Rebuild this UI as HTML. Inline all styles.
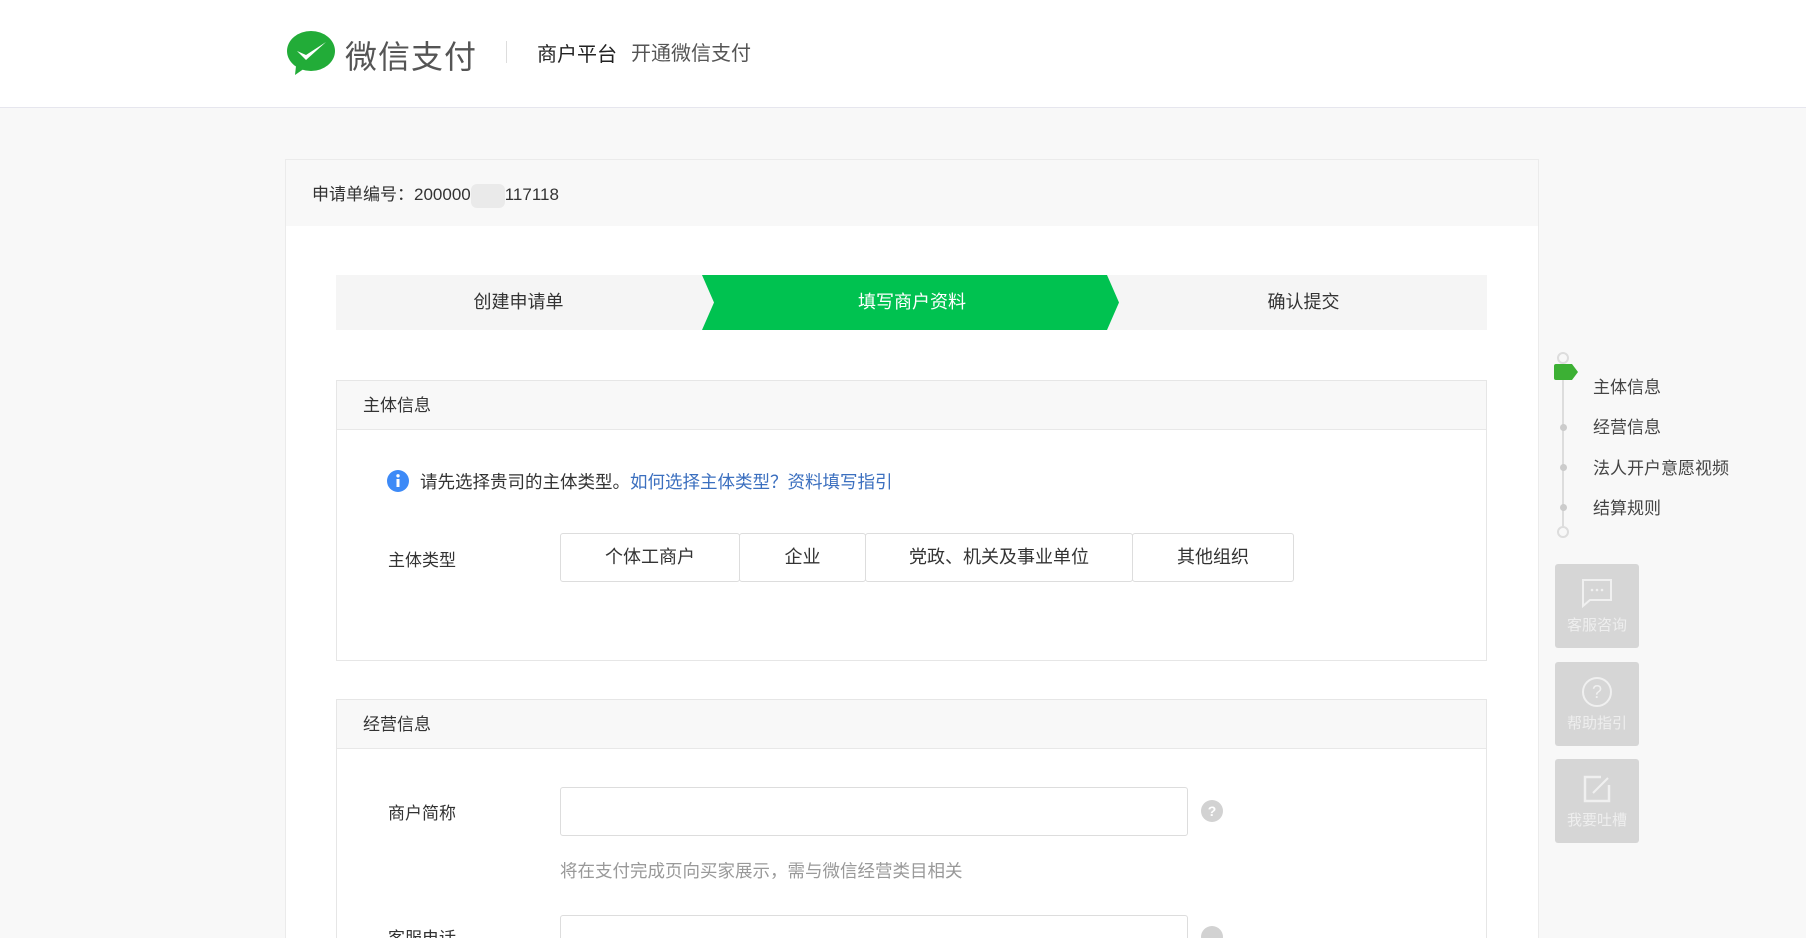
<!DOCTYPE html>
<html><head><meta charset="utf-8"><style>
*{margin:0;padding:0;box-sizing:border-box}
html{width:1806px;height:938px;overflow:hidden}
body{width:1806px;height:938px;overflow:hidden;background:#f8f8f8;font-family:"Liberation Sans","Noto Sans CJK SC",sans-serif;color:#333;position:relative}
.abs{position:absolute}
.hdr{left:0;top:0;width:1806px;height:108px;background:#fff;border-bottom:1px solid #e6e6ee}
.card{left:285px;top:159px;width:1254px;height:779px;background:#fff;border:1px solid #ebebeb;border-bottom:none}
.cardtop{left:0;top:0;width:1252px;height:66px;background:#f8f8f8}
.sec{border:1px solid #e6e6e6;background:#fff}
.sech{position:absolute;left:0;top:0;right:0;height:49px;background:#f8f8f8;border-bottom:1px solid #e8e8e8;font-size:17px;line-height:49px;padding-left:26px}
.btn{position:absolute;top:533px;height:49px;border:1px solid #ddd;border-radius:3px;background:#fff;font-size:18px;line-height:47px;text-align:center;color:#333}
.side{position:absolute;left:1555px;width:84px;height:84px;background:#d6d6d6;border-radius:3px;color:#eee;font-size:15px;text-align:center}
.nav{position:absolute;left:1593px;font-size:17px;color:#444}
.dot{position:absolute;left:1560px;width:7px;height:7px;border-radius:50%;background:#ccc}
</style></head><body>
<div class="abs hdr">
<svg class="abs" style="left:286px;top:30px" width="50" height="46" viewBox="0 0 50 46"><ellipse cx="25" cy="21" rx="24" ry="20" fill="#22ac38"/><path d="M10 36 L9 45 L19 38Z" fill="#22ac38"/><path d="M11 21 L20 30 L40 12 L20 25Z" fill="#fff"/></svg>
<div class="abs" style="left:345px;top:32px;font-size:32px;color:#555;letter-spacing:1px">微信支付</div>
<div class="abs" style="left:506px;top:41px;width:1px;height:22px;background:#ddd"></div>
<div class="abs" style="left:537px;top:38px;font-size:20px;color:#222">商户平台</div>
<div class="abs" style="left:631px;top:37px;font-size:20px;color:#555">开通微信支付</div>
</div>
<div class="abs card">
<div class="abs cardtop"></div>
<div class="abs" style="left:26px;top:20px;font-size:17px;color:#333">申请单编号：200000<span style="display:inline-block;width:34px;height:24px;background:#eaeaea;vertical-align:middle;border-radius:6px"></span>117118</div>
</div>
<svg class="abs" style="left:336px;top:275px" width="1151" height="55"><rect width="1151" height="55" fill="#f5f5f5"/><polygon points="366,0 771,0 783,27.5 771,55 366,55 378,27.5" fill="#00c250"/></svg>
<div class="abs" style="left:336px;top:275px;width:365px;line-height:55px;text-align:center;font-size:18px">创建申请单</div>
<div class="abs" style="left:712px;top:275px;width:400px;line-height:55px;text-align:center;font-size:18px;color:#fff">填写商户资料</div>
<div class="abs" style="left:1120px;top:275px;width:367px;line-height:55px;text-align:center;font-size:18px">确认提交</div>

<div class="abs sec" style="left:336px;top:380px;width:1151px;height:281px"><div class="sech">主体信息</div></div>
<svg class="abs" style="left:387px;top:470px" width="22" height="22"><circle cx="11" cy="11" r="11" fill="#3d8af7"/><rect x="9.5" y="9" width="3" height="8" fill="#fff"/><circle cx="11" cy="5.8" r="1.7" fill="#fff"/></svg>
<div class="abs" style="left:420px;top:469px;font-size:17.5px;color:#333">请先选择贵司的主体类型。<span style="color:#3b6fbf">如何选择主体类型？资料填写指引</span></div>
<div class="abs" style="left:388px;top:546px;font-size:17px">主体类型</div>
<div class="btn" style="left:560px;width:180px">个体工商户</div>
<div class="btn" style="left:739px;width:127px">企业</div>
<div class="btn" style="left:865px;width:268px">党政、机关及事业单位</div>
<div class="btn" style="left:1132px;width:162px">其他组织</div>

<div class="abs sec" style="left:336px;top:699px;width:1151px;height:260px"><div class="sech">经营信息</div></div>
<div class="abs" style="left:388px;top:799px;font-size:17px">商户简称</div>
<div class="abs" style="left:560px;top:787px;width:628px;height:49px;border:1px solid #ddd;border-radius:3px;background:#fff"></div>
<svg class="abs" style="left:1201px;top:800px" width="22" height="22"><circle cx="11" cy="11" r="11" fill="#d2d2d2"/><text x="11" y="16" text-anchor="middle" font-size="14" font-weight="bold" fill="#fff" font-family="Liberation Sans">?</text></svg>
<div class="abs" style="left:560px;top:858px;font-size:17.5px;color:#999">将在支付完成页向买家展示，需与微信经营类目相关</div>
<div class="abs" style="left:388px;top:924px;font-size:17px">客服电话</div>
<div class="abs" style="left:560px;top:915px;width:628px;height:49px;border:1px solid #ddd;border-radius:3px;background:#fff"></div>
<svg class="abs" style="left:1201px;top:926px" width="22" height="22"><circle cx="11" cy="11" r="11" fill="#d2d2d2"/></svg>

<div class="abs" style="left:1562px;top:362px;width:2px;height:168px;background:#ddd"></div>
<div class="abs" style="left:1557px;top:352px;width:12px;height:12px;border:2px solid #ddd;border-radius:50%;background:#f8f8f8"></div>
<div class="abs" style="left:1557px;top:526px;width:12px;height:12px;border:2px solid #ddd;border-radius:50%;background:#f8f8f8"></div>
<svg class="abs" style="left:1554px;top:364px" width="26" height="16"><path d="M2 0 H18 L24 8 L18 16 H2 Q0 16 0 14 V2 Q0 0 2 0Z" fill="#3cb034"/></svg>
<div class="dot" style="top:424px"></div><div class="dot" style="top:464px"></div><div class="dot" style="top:504px"></div>
<div class="nav" style="top:373px">主体信息</div>
<div class="nav" style="top:413px">经营信息</div>
<div class="nav" style="top:454px">法人开户意愿视频</div>
<div class="nav" style="top:494px">结算规则</div>

<div class="side" style="top:564px"><svg style="margin-top:14px" width="32" height="30" viewBox="0 0 32 30"><path d="M2 2 H30 V22 H9 L2 28Z" fill="none" stroke="#f0f0f0" stroke-width="2"/><circle cx="11" cy="12" r="1.3" fill="#f0f0f0"/><circle cx="16" cy="12" r="1.3" fill="#f0f0f0"/><circle cx="21" cy="12" r="1.3" fill="#f0f0f0"/></svg><div style="margin-top:2px">客服咨询</div></div>
<div class="side" style="top:662px"><svg style="margin-top:14px" width="32" height="32"><circle cx="16" cy="16" r="14" fill="none" stroke="#f0f0f0" stroke-width="2"/><text x="16" y="22" text-anchor="middle" font-size="18" fill="#f0f0f0" font-family="Liberation Sans">?</text></svg><div>帮助指引</div></div>
<div class="side" style="top:759px"><svg style="margin-top:14px" width="32" height="32"><path d="M20 4 H4 V28 H28 V12" fill="none" stroke="#f0f0f0" stroke-width="2.5"/><path d="M12 20 L27 5" stroke="#f0f0f0" stroke-width="2"/></svg><div>我要吐槽</div></div>
</body></html>
